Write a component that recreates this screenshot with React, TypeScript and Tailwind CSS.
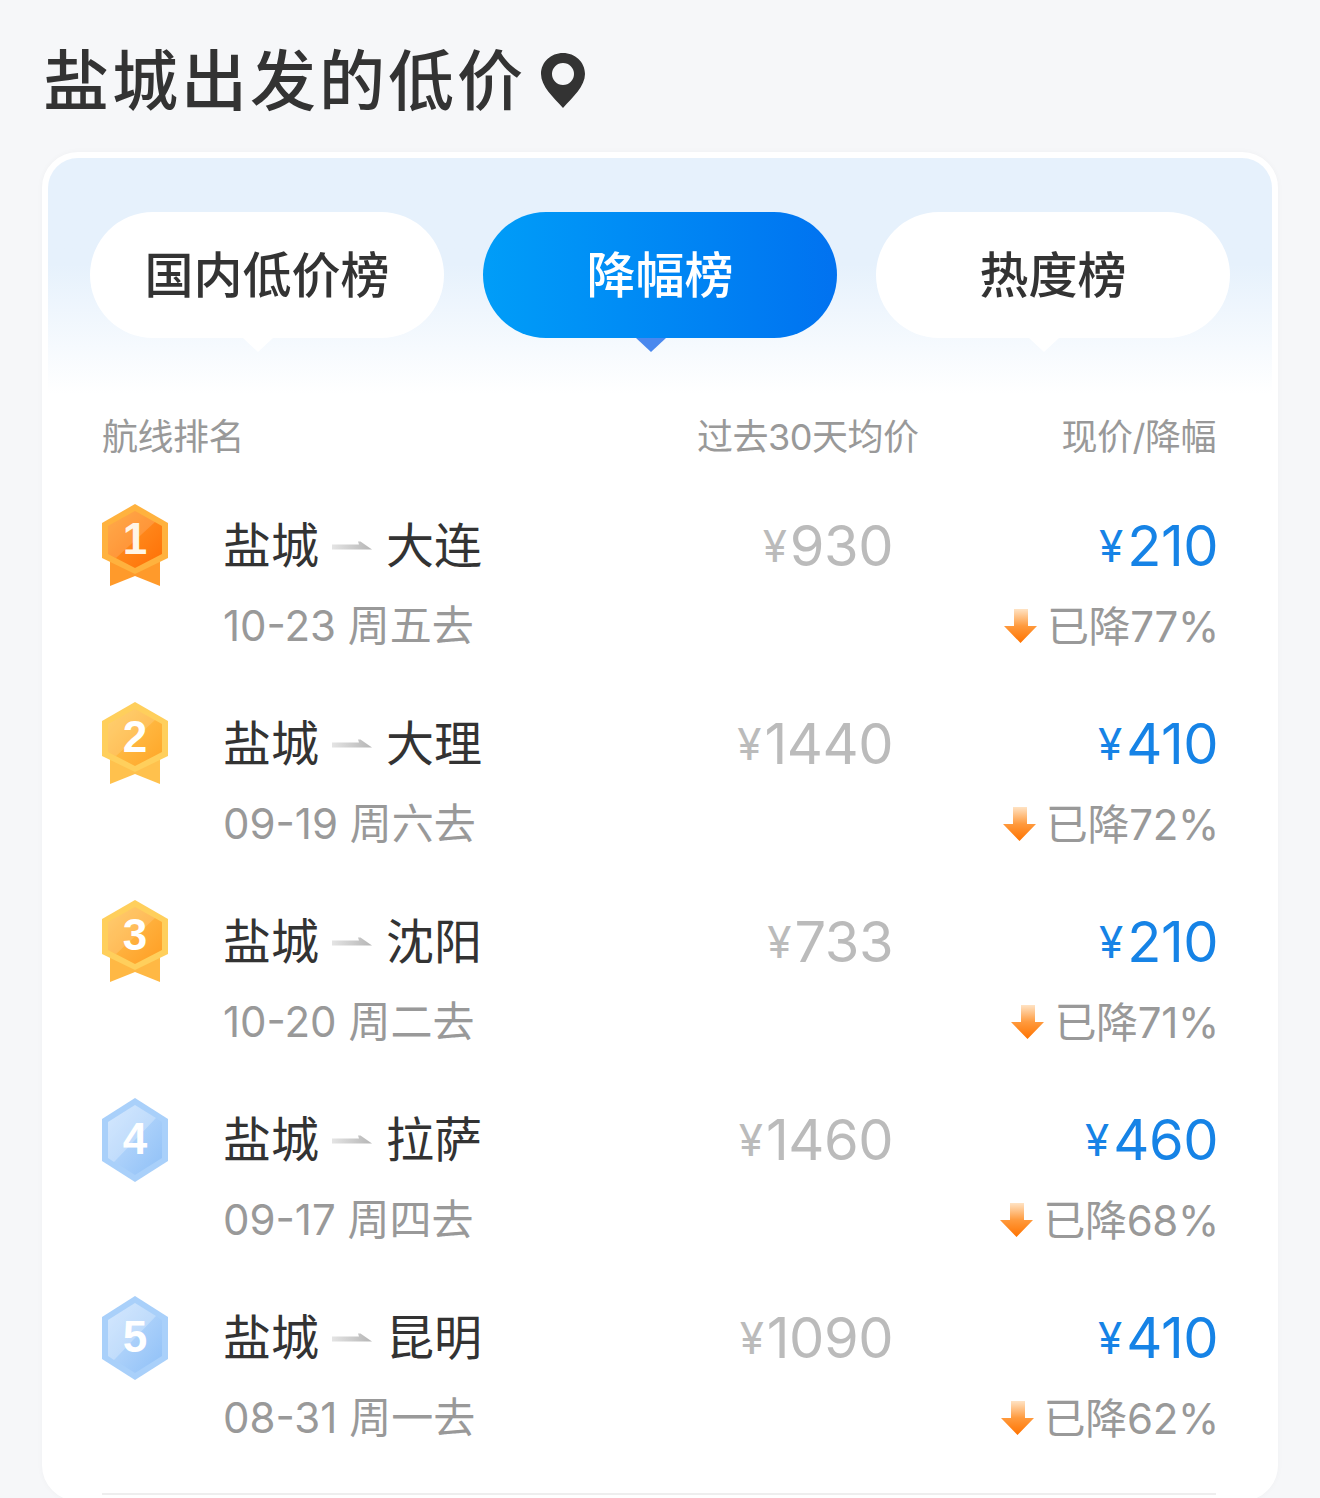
const font = "font-['Inter','Noto_Sans_CJK_SC',sans-serif]";

const rows = [
  { rank: 1, to: "大连", date: "10-23 周五去", old: "930", now: "210", drop: "77%" },
  { rank: 2, to: "大理", date: "09-19 周六去", old: "1440", now: "410", drop: "72%" },
  { rank: 3, to: "沈阳", date: "10-20 周二去", old: "733", now: "210", drop: "71%" },
  { rank: 4, to: "拉萨", date: "09-17 周四去", old: "1460", now: "460", drop: "68%" },
  { rank: 5, to: "昆明", date: "08-31 周一去", old: "1090", now: "410", drop: "62%" },
];

const medalColors: Record<number, { edge: string; ribbon: string; light: string; dark: string }> = {
  1: { edge: "#ffb23e", ribbon: "#ff9a2b", light: "#ff9d2e", dark: "#ff6f05" },
  2: { edge: "#ffcf5c", ribbon: "#ffc14d", light: "#ffc95a", dark: "#ffa526" },
  3: { edge: "#ffcf5c", ribbon: "#ffb844", light: "#ffc458", dark: "#ff9d22" },
  4: { edge: "#a9d0fa", ribbon: "", light: "#c6e0fd", dark: "#8fc0f7" },
  5: { edge: "#a9d0fa", ribbon: "", light: "#c6e0fd", dark: "#8fc0f7" },
};

function Medal({ rank }: { rank: number }) {
  const c = medalColors[rank];
  const hasRibbon = rank <= 3;
  const id = `medal-${rank}`;
  return (
    <svg width="66" height="84" viewBox="0 0 66 84" className="shrink-0">
      <defs>
        <linearGradient id={id} x1="0" y1="0" x2="1" y2="1">
          <stop offset="0" stopColor={c.light} />
          <stop offset="1" stopColor={c.dark} />
        </linearGradient>
      </defs>
      {hasRibbon && <path d="M8 50V82L33 72L58 82V50Z" fill={c.ribbon} />}
      {hasRibbon ? (
        <>
          <path d="M33 0L66 19V54L33 70L0 54V19Z" fill={c.edge} />
          <path d="M33 7L60 22V50L33 64L6 50V22Z" fill={`url(#${id})`} />
          <path d="M33 7L53 18L14 54L6 50V22Z" fill="#ffffff" fillOpacity="0.14" />
        </>
      ) : (
        <>
          <path d="M33 0L66 21V63L33 84L0 63V21Z" fill={c.edge} />
          <path d="M33 7L60 24V60L33 77L6 60V24Z" fill={`url(#${id})`} />
          <path d="M33 7L54 20L12 64L6 60V24Z" fill="#ffffff" fillOpacity="0.25" />
        </>
      )}
      <text
        x="33"
        y={hasRibbon ? 50 : 56}
        textAnchor="middle"
        fontSize="44"
        fontWeight="700"
        fill={rank === 1 ? "#fff6e8" : "#ffffff"}
        fontFamily="Liberation Sans, sans-serif"
      >
        {rank}
      </text>
    </svg>
  );
}

function RouteArrow() {
  return (
    <svg width="40" height="10" viewBox="0 0 40 10" className="ml-[13px] mr-[14px] shrink-0">
      <defs>
        <linearGradient id="route-arrow" x1="0" y1="0" x2="1" y2="0">
          <stop offset="0" stopColor="#e4e4e4" />
          <stop offset="1" stopColor="#b5b5b5" />
        </linearGradient>
      </defs>
      <path d="M0 3.500H27L26 0.500L28.500 0.500L40 8.500H0Z" fill="url(#route-arrow)" />
    </svg>
  );
}

function DownArrow() {
  return (
    <svg width="33" height="34" viewBox="0 0 33 34" className="shrink-0">
      <defs>
        <linearGradient id="down-arrow" x1="0" y1="0" x2="0" y2="1">
          <stop offset="0" stopColor="#ffe3c4" />
          <stop offset="0.5" stopColor="#ff9a3d" />
          <stop offset="1" stopColor="#ff7300" />
        </linearGradient>
      </defs>
      <path d="M10 0H24V17H33L16.500 34L0 17H10Z" fill="url(#down-arrow)" />
    </svg>
  );
}

function Tab({ label, active }: { label: string; active?: boolean }) {
  return (
    <div
      className={`relative flex h-[126px] w-[354px] items-center justify-center rounded-[63px] pt-[2px] text-[49px] font-medium ${
        active ? "bg-gradient-to-r from-[#019df8] to-[#0272f0] text-white" : "bg-white text-[#333333]"
      }`}
    >
      {label}
      <div
        className={`absolute left-[153px] top-[126px] h-[14px] w-[30px] [clip-path:polygon(0_0,100%_0,50%_100%)] ${
          active ? "bg-[#4a88ee]" : "bg-white"
        }`}
      />
    </div>
  );
}

function Row({ row }: { row: (typeof rows)[number] }) {
  return (
    <div className="flex h-[198px]">
      <div className="w-[122px] pt-[24px]">
        <Medal rank={row.rank} />
      </div>
      <div className="w-[669px] pt-[36px]">
        <div className="-ml-[1px] flex h-[60px] items-center text-[48px] text-[#333333]">
          盐城
          <RouteArrow />
          {row.to}
        </div>
        <div className="-ml-[1px] mt-[25px] h-[50px] text-[42px] leading-[50px] text-[#999999]">{row.date}</div>
      </div>
      <div className="pt-[36px]">
        <div className="flex h-[60px] w-[0px] items-center justify-end text-[#bbbbbb]">
          <span className="mr-[3px] text-[44px]">¥</span>
          <span className="text-[56px] tracking-[-0.5px]">{row.old}</span>
        </div>
      </div>
      <div className="ml-auto flex flex-col items-end pt-[36px]">
        <div className="-mr-[2px] flex h-[60px] items-center text-[#1683e6]">
          <span className="mr-[4px] text-[44px]">¥</span>
          <span className="text-[56px] tracking-[-0.5px]">{row.now}</span>
        </div>
        <div className="-mr-[3px] mt-[25px] flex h-[50px] items-center gap-[10px] text-[42px] tracking-[-0.3px] text-[#999999]">
          <DownArrow />
          已降{row.drop}
        </div>
      </div>
    </div>
  );
}

export default function App() {
  return (
    <div className={`h-[1498px] overflow-hidden bg-[#f6f7f9] ${font}`}>
      <div className="flex h-[152px] items-start pl-[43px] pt-[33px]">
        <h1 className="h-[96px] text-[66px] font-medium leading-[96px] tracking-[3px] text-[#333333]">盐城出发的低价</h1>
        <svg width="44" height="55" viewBox="0 0 44 55" className="ml-[15px] mt-[20px]">
          <path
            fillRule="evenodd"
            d="M22 0C10 0 0 9 0 21C0 33 12 44 22 55C32 44 44 33 44 21C44 9 34 0 22 0ZM22 10A11 11 0 1 1 22 32A11 11 0 1 1 22 10Z"
            fill="#333333"
          />
        </svg>
      </div>
      <div className="mx-[42px] rounded-[36px] border-[6px] border-white bg-white shadow-[0_0_6px_rgba(0,0,0,0.03)]">
        <div className="rounded-t-[30px] bg-gradient-to-b from-[#e6f1fc] from-[45%] to-white px-[42px] pb-[56px] pt-[54px]">
          <div className="flex gap-[39px]">
            <Tab label="国内低价榜" />
            <Tab label="降幅榜" active />
            <Tab label="热度榜" />
          </div>
        </div>
        <div className="pl-[54px] pr-[56px]">
          <div className="mt-[18px] flex h-[50px] items-center text-[36px] leading-[50px] tracking-[-0.5px] text-[#999999]">
            <span>航线排名</span>
            <span className="ml-auto mr-[143px]">过去30天均价</span>
            <span>现价/降幅</span>
          </div>
          <div className="mt-[18px]">
            {rows.map((row) => (
              <Row key={row.rank} row={row} />
            ))}
          </div>
          <div className="mt-[23px] border-t-2 border-[#eeeeee]" />
        </div>
      </div>
    </div>
  );
}
